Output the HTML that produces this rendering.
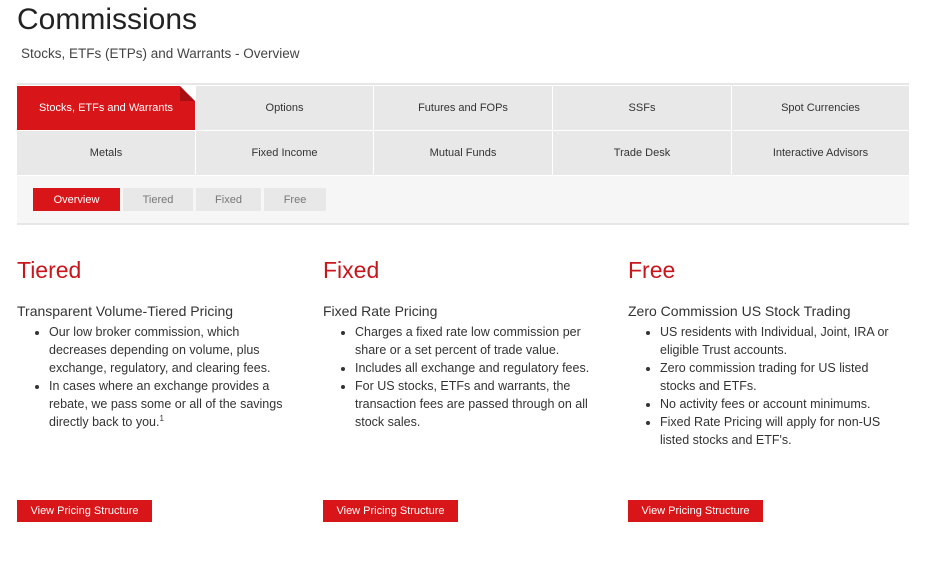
<!DOCTYPE html>
<html><head><style>
body{margin:0;width:942px;height:584px;background:#fff;font-family:"Liberation Sans",sans-serif;color:#333;position:relative;overflow:hidden}
h1{position:absolute;left:17px;top:3px;margin:0;font-size:30px;font-weight:normal;color:#222}
.sub{position:absolute;left:21px;top:46px;font-size:13.5px;color:#444}
.line{position:absolute;left:17px;width:892px;height:2px;background:#e6e6e6}
.tab{position:absolute;height:44px;background:#e8e8e8;font-size:11px;color:#333;display:flex;align-items:center;justify-content:center}
.tab.act{background:#d81518;color:#fff}
.subarea{position:absolute;left:17px;top:176px;width:892px;height:47px;background:#f6f6f6}
.st{position:absolute;top:188px;height:23px;background:#e8e8e8;font-size:11px;color:#777;display:flex;align-items:center;justify-content:center}
.st.act{background:#d81518;color:#fff}
.col{position:absolute;top:256px;width:272px}
.col h2{margin:0;font-size:23px;font-weight:normal;color:#c8161d;line-height:28px}
.col h3{margin:18px 0 0;font-size:14px;font-weight:normal;color:#333;line-height:18px}
.col ul{margin:3px 0 0;padding-left:32px;font-size:12.5px;line-height:18px;color:#333}
.btn{position:absolute;top:500px;width:135px;height:22px;background:#d81518;color:#fff;font-size:11px;display:flex;align-items:center;justify-content:center}
</style></head><body>
<h1>Commissions</h1>
<div class="sub">Stocks, ETFs (ETPs) and Warrants - Overview</div>
<div class="line" style="top:83px"></div>
<div class="tab act" style="left:17px;top:86px;width:178px">Stocks, ETFs and Warrants</div>
<div style="position:absolute;left:180px;top:86px;width:0;height:0;border-left:15px solid #a80f12;border-top:15px solid transparent"></div>
<div style="position:absolute;left:180px;top:86px;width:0;height:0;border-right:15px solid #fff;border-bottom:15px solid transparent"></div>
<div class="tab" style="left:196px;top:86px;width:177px">Options</div>
<div class="tab" style="left:374px;top:86px;width:178px">Futures and FOPs</div>
<div class="tab" style="left:553px;top:86px;width:178px">SSFs</div>
<div class="tab" style="left:732px;top:86px;width:177px">Spot Currencies</div>
<div class="tab" style="left:17px;top:131px;width:178px">Metals</div>
<div class="tab" style="left:196px;top:131px;width:177px">Fixed Income</div>
<div class="tab" style="left:374px;top:131px;width:178px">Mutual Funds</div>
<div class="tab" style="left:553px;top:131px;width:178px">Trade Desk</div>
<div class="tab" style="left:732px;top:131px;width:177px">Interactive Advisors</div>
<div class="subarea"></div>
<div class="line" style="top:223px"></div>
<div class="st act" style="left:33px;width:87px">Overview</div>
<div class="st" style="left:123px;width:70px">Tiered</div>
<div class="st" style="left:196px;width:65px">Fixed</div>
<div class="st" style="left:264px;width:62px">Free</div>
<div class="col" style="left:17px"><h2>Tiered</h2><h3>Transparent Volume-Tiered Pricing</h3><ul><li>Our low broker commission, which decreases depending on volume, plus exchange, regulatory, and clearing fees.</li><li>In cases where an exchange provides a rebate, we pass some or all of the savings directly back to you.<sup style="font-size:8px;line-height:0">1</sup></li></ul></div>
<div class="col" style="left:323px"><h2>Fixed</h2><h3>Fixed Rate Pricing</h3><ul><li>Charges a fixed rate low commission per share or a set percent of trade value.</li><li>Includes all exchange and regulatory fees.</li><li>For US stocks, ETFs and warrants, the transaction fees are passed through on all stock sales.</li></ul></div>
<div class="col" style="left:628px"><h2>Free</h2><h3>Zero Commission US Stock Trading</h3><ul><li>US residents with Individual, Joint, IRA or eligible Trust accounts.</li><li>Zero commission trading for US listed stocks and ETFs.</li><li>No activity fees or account minimums.</li><li>Fixed Rate Pricing will apply for non-US listed stocks and ETF's.</li></ul></div>
<div class="btn" style="left:17px">View Pricing Structure</div>
<div class="btn" style="left:323px">View Pricing Structure</div>
<div class="btn" style="left:628px">View Pricing Structure</div>
</body></html>
